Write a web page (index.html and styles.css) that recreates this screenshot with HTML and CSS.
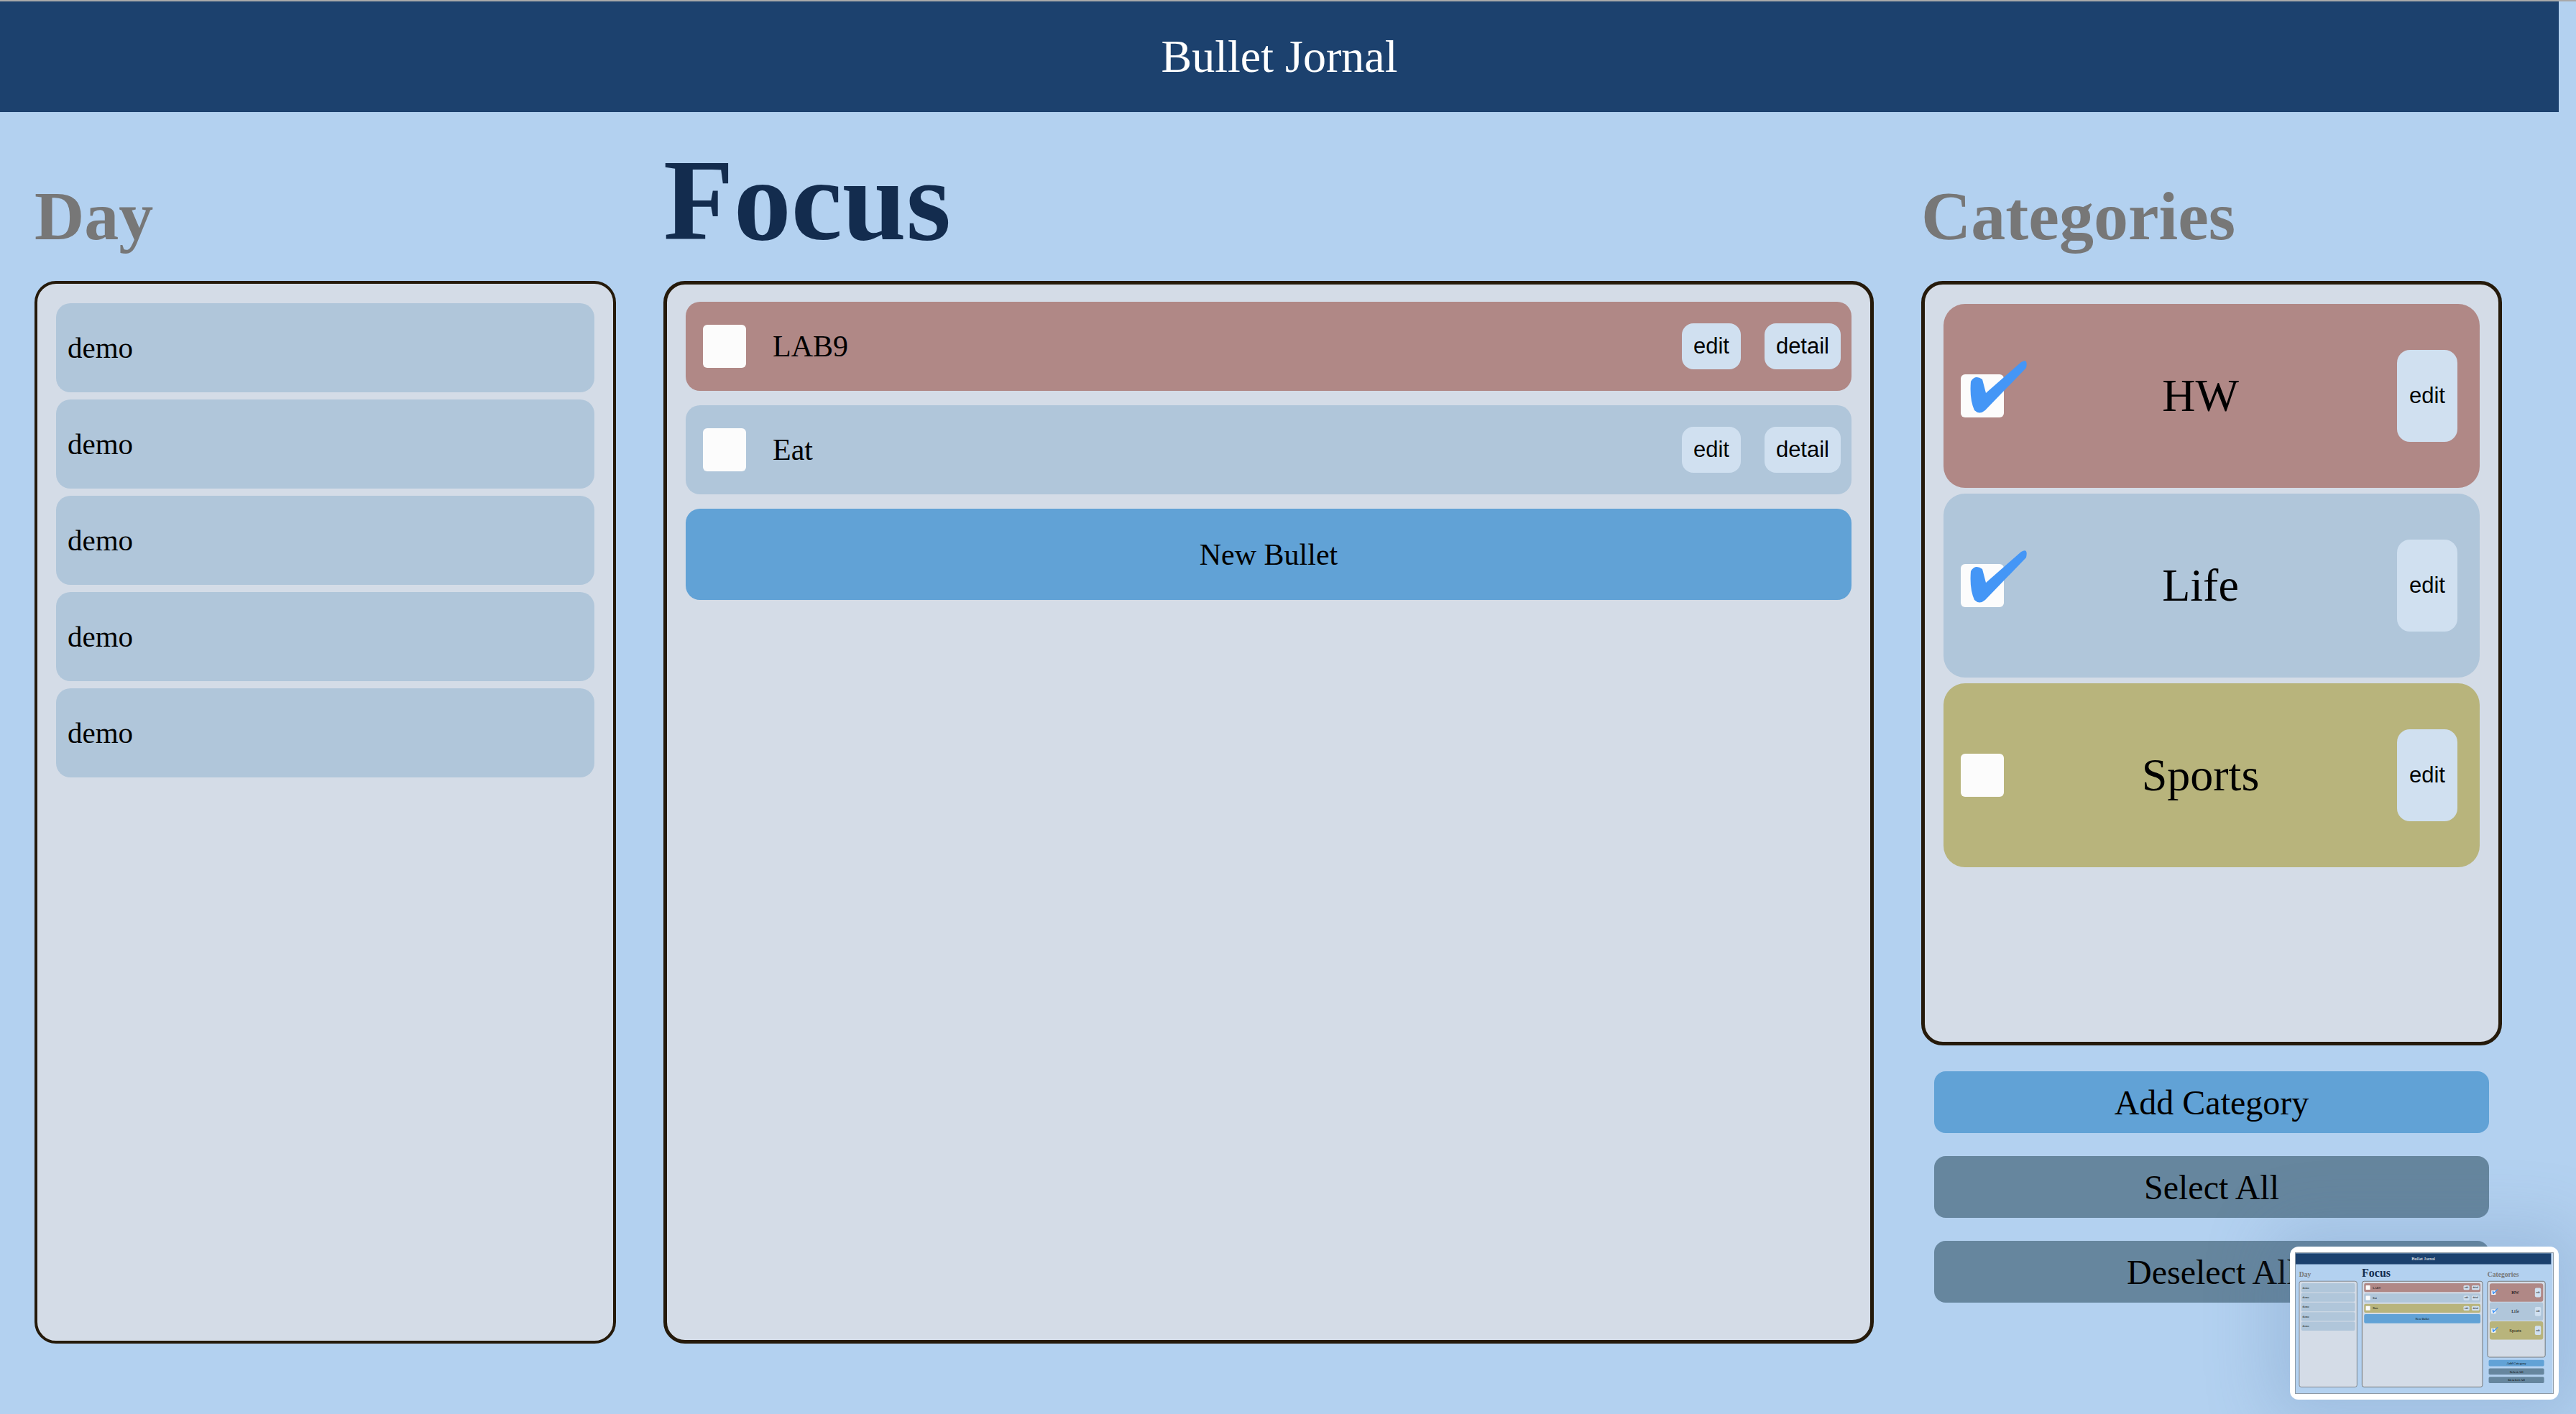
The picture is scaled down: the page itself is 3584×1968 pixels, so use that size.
FILE: index.html
```html
<!DOCTYPE html>
<html lang="en">
<head>
<meta charset="utf-8">
<title>Bullet Jornal</title>
<link rel="stylesheet" href="styles.css">
</head>
<body>
<div class="app">
  <header class="topbar">Bullet Jornal</header>
  <main class="board">
    <h2 class="col-title">Day</h2>
    <h1 class="col-title focus-title">Focus</h1>
    <h2 class="col-title">Categories</h2>

    <section class="panel day-panel">
      <div class="day-item">demo</div>
      <div class="day-item">demo</div>
      <div class="day-item">demo</div>
      <div class="day-item">demo</div>
      <div class="day-item">demo</div>
    </section>

    <section class="panel focus-panel">
      <div class="bullet c-hw">
        <span class="box"></span>
        <span class="bullet-text">LAB9</span>
        <button class="mini-btn">edit</button>
        <button class="mini-btn">detail</button>
      </div>
      <div class="bullet c-life">
        <span class="box"></span>
        <span class="bullet-text">Eat</span>
        <button class="mini-btn">edit</button>
        <button class="mini-btn">detail</button>
      </div>
      <button class="new-bullet">New Bullet</button>
    </section>

    <div class="cat-col">
      <section class="panel cat-panel">
        <div class="cat c-hw">
          <span class="box checked"><svg class="tick" viewBox="0 -22 100 80"><path d="M14 10 Q20 0 30 7 L35 26 L84 -17 Q94 -23 91 -9 L34 50 Q26 57 19 50 Q12 35 14 10 Z"/></svg></span>
          <span class="cat-name">HW</span>
          <button class="mini-btn tall">edit</button>
        </div>
        <div class="cat c-life">
          <span class="box checked"><svg class="tick" viewBox="0 -22 100 80"><path d="M14 10 Q20 0 30 7 L35 26 L84 -17 Q94 -23 91 -9 L34 50 Q26 57 19 50 Q12 35 14 10 Z"/></svg></span>
          <span class="cat-name">Life</span>
          <button class="mini-btn tall">edit</button>
        </div>
        <div class="cat c-sports">
          <span class="box"></span>
          <span class="cat-name">Sports</span>
          <button class="mini-btn tall">edit</button>
        </div>
      </section>
      <button class="wide-btn add">Add Category</button>
      <button class="wide-btn sel">Select All</button>
      <button class="wide-btn sel">Deselect All</button>
    </div>
  </main>

  <div class="thumb">
    <div class="thumb-screen">
      <div class="app mini-app">
        <header class="topbar">Bullet Jornal</header>
        <main class="board">
          <h2 class="col-title">Day</h2>
          <h1 class="col-title focus-title">Focus</h1>
          <h2 class="col-title">Categories</h2>
          <section class="panel day-panel">
            <div class="day-item">demo</div>
            <div class="day-item">demo</div>
            <div class="day-item">demo</div>
            <div class="day-item">demo</div>
            <div class="day-item">demo</div>
          </section>
          <section class="panel focus-panel">
            <div class="bullet c-hw"><span class="box"></span><span class="bullet-text">LAB9</span><button class="mini-btn">edit</button><button class="mini-btn">detail</button></div>
            <div class="bullet c-life"><span class="box"></span><span class="bullet-text">Eat</span><button class="mini-btn">edit</button><button class="mini-btn">detail</button></div>
            <div class="bullet c-sports"><span class="box"></span><span class="bullet-text">Run</span><button class="mini-btn">edit</button><button class="mini-btn">detail</button></div>
            <button class="new-bullet">New Bullet</button>
          </section>
          <div class="cat-col">
            <section class="panel cat-panel">
              <div class="cat c-hw"><span class="box checked"><svg class="tick" viewBox="0 -22 100 80"><path d="M14 10 Q20 0 30 7 L35 26 L84 -17 Q94 -23 91 -9 L34 50 Q26 57 19 50 Q12 35 14 10 Z"/></svg></span><span class="cat-name">HW</span><button class="mini-btn tall">edit</button></div>
              <div class="cat c-life"><span class="box checked"><svg class="tick" viewBox="0 -22 100 80"><path d="M14 10 Q20 0 30 7 L35 26 L84 -17 Q94 -23 91 -9 L34 50 Q26 57 19 50 Q12 35 14 10 Z"/></svg></span><span class="cat-name">Life</span><button class="mini-btn tall">edit</button></div>
              <div class="cat c-sports"><span class="box checked"><svg class="tick" viewBox="0 -22 100 80"><path d="M14 10 Q20 0 30 7 L35 26 L84 -17 Q94 -23 91 -9 L34 50 Q26 57 19 50 Q12 35 14 10 Z"/></svg></span><span class="cat-name">Sports</span><button class="mini-btn tall">edit</button></div>
            </section>
            <button class="wide-btn add">Add Category</button>
            <button class="wide-btn sel">Select All</button>
            <button class="wide-btn sel">Deselect All</button>
          </div>
        </main>
      </div>
    </div>
  </div>
</div>
</body>
</html>
```
FILE: styles.css
```css
html, body {
  margin: 0;
  padding: 0;
  overflow: hidden;
  background: #b3d1f0;
}

.app {
  position: relative;
  width: 3584px;
  height: 1968px;
  box-sizing: border-box;
  border-top: 2px solid #a9a9a9;
  background: #b3d1f0;
  font-family: "Liberation Serif", "Times New Roman", serif;
  color: #000;
  overflow: hidden;
}

.topbar {
  width: calc(100% - 24px);
  height: 154px;
  background: #1c416e;
  color: #fff;
  font-size: 64px;
  display: flex;
  align-items: center;
  justify-content: center;
}

.board {
  display: grid;
  grid-template-columns: 809px 1684px 808px;
  column-gap: 66px;
  row-gap: 32px;
  padding: 43px 0 0 48px;
  align-items: start;
}

.col-title {
  margin: 0;
  font-size: 96px;
  font-weight: bold;
  line-height: 1;
  color: #777777;
  align-self: baseline;
}

.focus-title {
  font-size: 160px;
  color: #132c4e;
}

.panel {
  box-sizing: border-box;
  background: #d4dce7;
  border: 5px solid #251a0b;
  border-radius: 30px;
  display: flex;
  flex-direction: column;
}

.day-panel {
  height: 1479px;
  border-width: 4px;
  padding: 27px 26px;
  gap: 10px;
}

.day-item {
  height: 124px;
  flex: none;
  border-radius: 20px;
  background: #b0c6da;
  padding-left: 16px;
  display: flex;
  align-items: center;
  font-size: 41px;
}

.focus-panel {
  height: 1479px;
  padding: 24px 26px;
  gap: 20px;
}

.bullet {
  height: 124px;
  flex: none;
  border-radius: 20px;
  display: flex;
  align-items: center;
  padding: 0 15px 0 24px;
  gap: 33px;
}

.bullet-text {
  flex: 1;
  margin-left: 4px;
  font-size: 42px;
}

.c-hw { background: #b08886; }
.c-life { background: #b0c6da; }
.c-sports { background: #b8b47c; }

.box {
  position: relative;
  flex: none;
  width: 60px;
  height: 60px;
  border-radius: 6px;
  background: #fcfcfc;
}

.tick {
  position: absolute;
  left: 0;
  top: -22px;
  width: 100px;
  height: 80px;
  fill: #4496f6;
}

.mini-btn {
  flex: none;
  height: 64px;
  padding: 0 16px;
  border: none;
  border-radius: 16px;
  background: #d0e0f0;
  color: #000;
  font-family: "Liberation Sans", Arial, sans-serif;
  font-size: 31px;
}

.mini-btn.tall {
  width: 84px;
  height: 128px;
  padding: 0;
  border-radius: 18px;
}

.new-bullet {
  flex: none;
  height: 127px;
  border: none;
  border-radius: 20px;
  background: #61a2d6;
  color: #000;
  font-family: "Liberation Serif", "Times New Roman", serif;
  font-size: 42px;
}

.cat-col {
  display: flex;
  flex-direction: column;
}

.cat-panel {
  height: 1064px;
  padding: 27px 26px;
  gap: 8px;
}

.cat {
  height: 256px;
  flex: none;
  border-radius: 30px;
  display: flex;
  align-items: center;
  padding: 0 31px 0 24px;
}

.cat-name {
  flex: 1;
  text-align: center;
  font-size: 64px;
}

.wide-btn {
  height: 86px;
  margin: 32px 18px 0;
  border: none;
  border-radius: 16px;
  color: #000;
  font-family: "Liberation Serif", "Times New Roman", serif;
  font-size: 48px;
}

.wide-btn.add {
  margin-top: 36px;
  background: #61a2d6;
}

.wide-btn.sel {
  background: #66869e;
}

/* screenshot preview thumbnail overlay */
.thumb {
  position: absolute;
  left: 3186px;
  top: 1733px;
  width: 374px;
  height: 213px;
  box-sizing: border-box;
  padding: 8px 7px 8px 7px;
  background: #fff;
  border-radius: 12px;
  box-shadow: 0 0 90px 30px rgba(80, 120, 165, 0.22);
}

.thumb-screen {
  width: 360px;
  height: 197px;
  box-sizing: border-box;
  border: 1px solid #8e9aa6;
  overflow: hidden;
}

.mini-app {
  transform: scale(0.0998);
  transform-origin: 0 0;
}
```
